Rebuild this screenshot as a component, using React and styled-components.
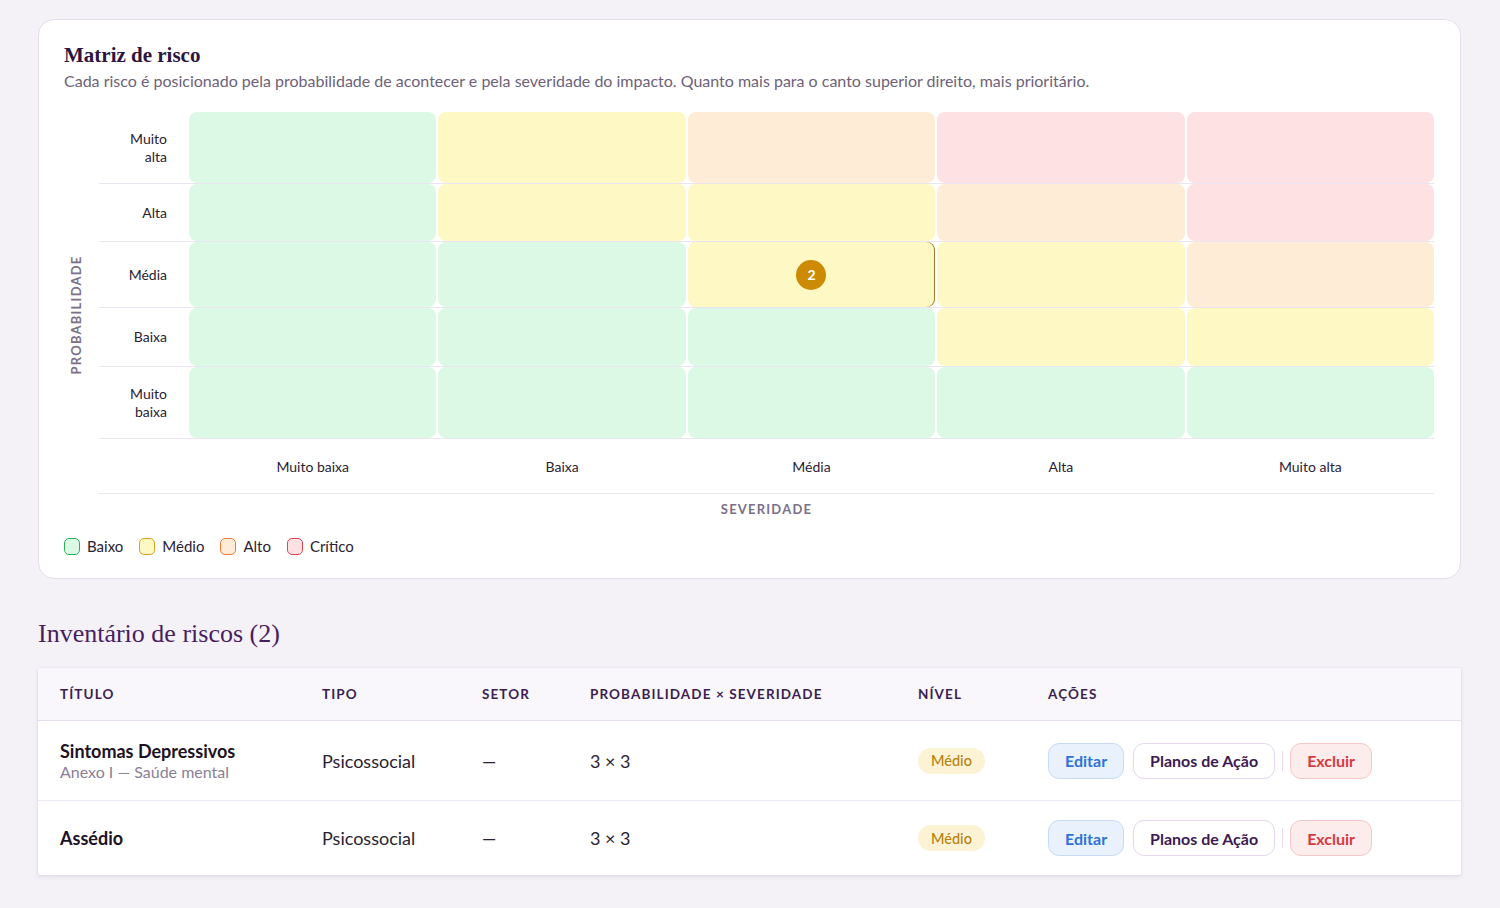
import React from "react";
import styled, { createGlobalStyle } from "styled-components";

const Global = createGlobalStyle`
  html, body { margin: 0; padding: 0; background: #f4f2f7; }
  body { font-family: Lato, "Noto Sans", sans-serif; color: #241a2e; }
  * { box-sizing: border-box; }
`;

const Page = styled.div`
  padding: 19px 39px 32px 38px;
  display: flex;
  flex-direction: column;
`;

const Card = styled.section`
  background: #fff;
  border: 1px solid #e4ddec;
  border-radius: 16px;
  padding: 22px 26px 23px 25px;
`;

const Title = styled.h2`
  margin: 0;
  font-family: "Liberation Serif", "DejaVu Serif", serif;
  font-weight: 700;
  font-size: 21px;
  line-height: 26px;
  color: #2d1540;
`;

const Subtitle = styled.p`
  margin: 1px 0 0;
  font-size: 16px;
  line-height: 24px;
  color: #6d6279;
`;

const MatrixArea = styled.div`
  display: flex;
  margin-top: 19px;
`;

const AxisY = styled.div`
  width: 24px;
  margin-right: 11px;
  display: flex;
  align-items: center;
  justify-content: center;
`;

const AxisText = styled.span`
  display: block;
  font-size: 13px;
  font-weight: 700;
  letter-spacing: 1.2px;
  color: #7b7089;
  white-space: nowrap;
  ${(p) => p.$vertical && "transform: rotate(-90deg);"}
`;

const MatrixBody = styled.div`
  flex: 1;
  display: flex;
  flex-direction: column;
`;

const MatrixRow = styled.div`
  display: grid;
  grid-template-columns: 88px repeat(5, 1fr);
  column-gap: 2px;
  height: ${(p) => p.$h}px;
  border-bottom: 1px solid #ebe5f2;
`;

const RowLabel = styled.div`
  display: flex;
  align-items: center;
  justify-content: flex-end;
  padding-right: 20px;
  text-align: right;
  font-size: 14px;
  line-height: 18px;
  color: #2a2233;
`;

const levelBg = {
  low: "#dcf9e6",
  mid: "#fef8c4",
  high: "#ffecd6",
  crit: "#fee1e3",
};

const Cell = styled.div`
  background: ${(p) => levelBg[p.$level]};
  border-radius: 8px;
  display: flex;
  align-items: center;
  justify-content: center;
  ${(p) => p.$marked && "box-shadow: inset -1px 0 0 #a57c2a;"}
`;

const Dot = styled.span`
  width: 30px;
  height: 30px;
  border-radius: 50%;
  background: #cc8a05;
  color: #fff;
  font-size: 14px;
  font-weight: 700;
  display: flex;
  align-items: center;
  justify-content: center;
`;

const AxisRow = styled.div`
  display: grid;
  grid-template-columns: 88px repeat(5, 1fr);
  column-gap: 2px;
  height: 55px;
  border-bottom: 1px solid #ebe5f2;
`;

const ColLabel = styled.div`
  display: flex;
  align-items: center;
  justify-content: center;
  font-size: 14px;
  color: #2a2233;
`;

const AxisX = styled.div`
  display: flex;
  justify-content: center;
  margin-top: 7px;
  line-height: 16px;
`;

const Legend = styled.div`
  display: flex;
  align-items: center;
  gap: 16px;
  margin-top: 20px;
`;

const LegendItem = styled.div`
  display: flex;
  align-items: center;
  gap: 7px;
  font-size: 15px;
  color: #2a2233;
`;

const legendBorder = {
  low: "#2fb35a",
  mid: "#d9a21b",
  high: "#ee7a3a",
  crit: "#e0454f",
};

const Swatch = styled.span`
  width: 16px;
  height: 17px;
  border-radius: 5px;
  background: ${(p) => levelBg[p.$level]};
  border: 1.5px solid ${(p) => legendBorder[p.$level]};
`;

const SectionTitle = styled.h2`
  margin: 40px 0 19px;
  font-family: "Liberation Serif", "DejaVu Serif", serif;
  font-weight: 400;
  font-size: 26px;
  line-height: 30px;
  color: #4a1d5e;
`;

const TableCard = styled.div`
  background: #fff;
  border-radius: 2px;
  box-shadow: 0 2px 4px rgba(70, 40, 100, 0.1), 0 0 0 1px #efeaf4;
  overflow: hidden;
`;

const cols = "262px 160px 108px 328px 130px 1fr";

const HeadRow = styled.div`
  display: grid;
  grid-template-columns: ${cols};
  height: 53px;
  align-items: center;
  background: #f9f7fc;
  border-bottom: 1px solid #e7dff0;
`;

const Th = styled.div`
  padding-left: 22px;
  font-size: 13.5px;
  font-weight: 700;
  letter-spacing: 1.1px;
  color: #3c1f52;
  text-transform: uppercase;
`;

const Row = styled.div`
  display: grid;
  grid-template-columns: ${cols};
  align-items: center;
  height: ${(p) => p.$h}px;
  border-bottom: ${(p) => (p.$last ? "none" : "1px solid #efe8f5")};
`;

const Td = styled.div`
  padding-left: 22px;
  font-size: 18px;
  color: #2a2233;
  display: flex;
  align-items: center;
`;

const TitleCell = styled.div`
  padding-left: 22px;
  display: flex;
  flex-direction: column;
`;

const RiskName = styled.span`
  font-size: 18px;
  font-weight: 700;
  color: #1d1224;
  line-height: 22px;
`;

const RiskMeta = styled.span`
  font-size: 16px;
  color: #8a7f97;
  line-height: 20px;
`;

const Badge = styled.span`
  display: inline-flex;
  align-items: center;
  height: 26px;
  padding: 0 13px;
  border-radius: 13px;
  background: #fcf2d4;
  color: #b5820c;
  font-size: 14.5px;
  font-weight: 500;
`;

const Actions = styled.div`
  padding-left: 22px;
  display: flex;
  align-items: center;
  gap: 9px;
`;

const btnTheme = {
  edit: { bg: "#e9f1fc", border: "#c9dbf4", color: "#2f72d8" },
  plans: { bg: "#fff", border: "#e3d6ee", color: "#3d1a52" },
  del: { bg: "#fdecec", border: "#f4c8c8", color: "#d63b41" },
};

const Button = styled.button`
  height: 36px;
  padding: 0 16px;
  border-radius: 11px;
  font-family: inherit;
  font-size: 16px;
  font-weight: 700;
  cursor: pointer;
  background: ${(p) => btnTheme[p.$kind].bg};
  border: 1px solid ${(p) => btnTheme[p.$kind].border};
  color: ${(p) => btnTheme[p.$kind].color};
`;

const Divider = styled.span`
  width: 1px;
  height: 20px;
  background: #e4dcea;
  margin: 0 -2px;
`;

const probLabels = [
  ["Muito", "alta"],
  ["Alta"],
  ["Média"],
  ["Baixa"],
  ["Muito", "baixa"],
];
const rowHeights = [72, 58, 66, 59, 72];
const sevLabels = ["Muito baixa", "Baixa", "Média", "Alta", "Muito alta"];

const grid = [
  ["low", "mid", "high", "crit", "crit"],
  ["low", "mid", "mid", "high", "crit"],
  ["low", "low", "mid", "mid", "high"],
  ["low", "low", "low", "mid", "mid"],
  ["low", "low", "low", "low", "low"],
];

const legend = [
  ["low", "Baixo"],
  ["mid", "Médio"],
  ["high", "Alto"],
  ["crit", "Crítico"],
];

const risks = [
  { name: "Sintomas Depressivos", meta: "Anexo I — Saúde mental", h: 80 },
  { name: "Assédio", h: 74 },
];

export default function App() {
  return (
    <>
      <Global />
      <Page>
        <Card>
          <Title>Matriz de risco</Title>
          <Subtitle>
            Cada risco é posicionado pela probabilidade de acontecer e pela severidade do impacto. Quanto mais
            para o canto superior direito, mais prioritário.
          </Subtitle>
          <MatrixArea>
            <AxisY>
              <AxisText $vertical>PROBABILIDADE</AxisText>
            </AxisY>
            <MatrixBody>
              {grid.map((row, r) => (
                <MatrixRow key={r} $h={rowHeights[r]}>
                  <RowLabel>
                    <span>
                      {probLabels[r].map((l, i) => (
                        <React.Fragment key={i}>
                          {i > 0 && <br />}
                          {l}
                        </React.Fragment>
                      ))}
                    </span>
                  </RowLabel>
                  {row.map((lv, c) => {
                    const hit = r === 2 && c === 2;
                    return (
                      <Cell key={c} $level={lv} $marked={hit}>
                        {hit && <Dot>2</Dot>}
                      </Cell>
                    );
                  })}
                </MatrixRow>
              ))}
              <AxisRow>
                <div />
                {sevLabels.map((s) => (
                  <ColLabel key={s}>{s}</ColLabel>
                ))}
              </AxisRow>
              <AxisX>
                <AxisText>SEVERIDADE</AxisText>
              </AxisX>
            </MatrixBody>
          </MatrixArea>
          <Legend>
            {legend.map(([lv, label]) => (
              <LegendItem key={lv}>
                <Swatch $level={lv} />
                {label}
              </LegendItem>
            ))}
          </Legend>
        </Card>

        <SectionTitle>Inventário de riscos (2)</SectionTitle>
        <TableCard>
          <HeadRow>
            <Th>Título</Th>
            <Th>Tipo</Th>
            <Th>Setor</Th>
            <Th>Probabilidade × Severidade</Th>
            <Th>Nível</Th>
            <Th>Ações</Th>
          </HeadRow>
          {risks.map((r, i) => (
            <Row key={r.name} $h={r.h} $last={i === risks.length - 1}>
              <TitleCell>
                <RiskName>{r.name}</RiskName>
                {r.meta && <RiskMeta>{r.meta}</RiskMeta>}
              </TitleCell>
              <Td>Psicossocial</Td>
              <Td>—</Td>
              <Td>3 × 3</Td>
              <Td>
                <Badge>Médio</Badge>
              </Td>
              <Actions>
                <Button $kind="edit">Editar</Button>
                <Button $kind="plans">Planos de Ação</Button>
                <Divider />
                <Button $kind="del">Excluir</Button>
              </Actions>
            </Row>
          ))}
        </TableCard>
      </Page>
    </>
  );
}
